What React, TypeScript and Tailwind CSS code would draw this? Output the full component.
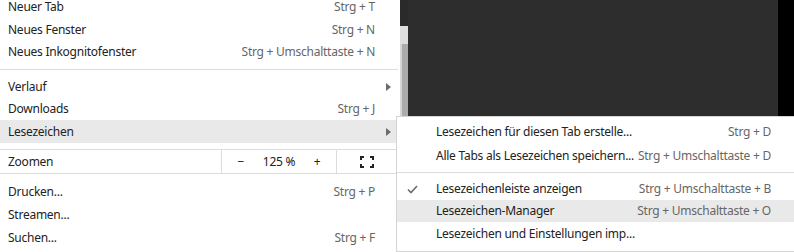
import type { ReactNode } from 'react'

function Arrow() {
  return (
    <svg width="5" height="8" viewBox="0 0 5 8" className="shrink-0">
      <polygon points="0,0 5,4 0,8" fill="#6b6b6b" />
    </svg>
  )
}

function Row({
  label,
  shortcut,
  arrow,
  className = '',
}: {
  label: string
  shortcut?: string
  arrow?: boolean
  className?: string
}) {
  return (
    <div className={`flex items-center justify-between pl-[8px] ${arrow ? 'pr-[9px]' : 'pr-[25px]'} ${className}`}>
      <span>{label}</span>
      {shortcut && <span className="text-[#666]">{shortcut}</span>}
      {arrow && <Arrow />}
    </div>
  )
}

function Sep() {
  return (
    <div className="py-[6px] pr-[2px]">
      <div className="h-px bg-[#dcdcdc]" />
    </div>
  )
}

function FullscreenIcon() {
  return (
    <svg width="14" height="12" viewBox="0 0 14 12" fill="none" stroke="#222" strokeWidth="2">
      <path d="M1 4V1h3M10 1h3v3M13 8v3h-3M4 11H1V8" />
    </svg>
  )
}

function SubRow({
  label,
  shortcut,
  check,
  className = '',
}: {
  label: string
  shortcut?: string
  check?: boolean
  className?: string
}) {
  return (
    <div className={`flex items-center pr-[23px] ${className}`}>
      <div className="flex w-[39px] shrink-0 items-center pl-[10px]">
        {check && (
          <svg width="11" height="9" viewBox="0 0 11 9" fill="none" stroke="#6b6b6b" strokeWidth="1.6">
            <path d="M1 4.5l3 3L10 1" />
          </svg>
        )}
      </div>
      <span className="flex-1">{label}</span>
      {shortcut && <span className="text-[#666]">{shortcut}</span>}
    </div>
  )
}

function SubMenu() {
  return (
    <div className="absolute top-[116px] bottom-0 left-[396px] right-0 border border-r-0 border-[#d4d4d4] bg-white pt-[3px] pb-[5px]">
      <SubRow className="h-[24px]" label="Lesezeichen für diesen Tab erstelle..." shortcut="Strg + D" />
      <SubRow className="h-[24px]" label="Alle Tabs als Lesezeichen speichern..." shortcut="Strg + Umschalttaste + D" />
      <div className="pt-[4px] pb-[5px]">
        <div className="h-px bg-[#dcdcdc]" />
      </div>
      <SubRow className="h-[22px]" check label="Lesezeichenleiste anzeigen" shortcut="Strg + Umschalttaste + B" />
      <SubRow className="h-[22px] bg-[#e9e9e9]" label="Lesezeichen-Manager" shortcut="Strg + Umschalttaste + O" />
      <SubRow className="h-[24px]" label="Lesezeichen und Einstellungen imp..." />
    </div>
  )
}

function Section({ children }: { children: ReactNode }) {
  return <div>{children}</div>
}

export default function App() {
  return (
    <div className="relative flex h-[252px] w-[794px] overflow-hidden whitespace-nowrap bg-white font-['Noto_Sans',sans-serif] text-[12px] tracking-[-0.25px] text-[#222]">
      <div className="w-[400px] shrink-0 bg-white">
        <div className="-mt-[4px]">
          <Row className="h-[22px]" label="Neuer Tab" shortcut="Strg + T" />
          <Row className="h-[23px]" label="Neues Fenster" shortcut="Strg + N" />
          <Row className="h-[22px]" label="Neues Inkognitofenster" shortcut="Strg + Umschalttaste + N" />
        </div>
        <Sep />
        <Section>
          <Row className="h-[22px]" label="Verlauf" arrow />
          <Row className="h-[22px]" label="Downloads" shortcut="Strg + J" />
          <Row className="h-[23px] bg-[#e9e9e9]" label="Lesezeichen" arrow />
        </Section>
        <div className="h-[6px]" />
        <div className="flex h-[25px] border-y border-[#dcdcdc] pr-[2px]">
          <div className="flex w-[222px] items-center border-r border-[#dcdcdc] pl-[8px]">Zoomen</div>
          <div className="flex w-[115px] items-center border-r border-[#dcdcdc]">
            <span className="w-[38px] text-center">−</span>
            <span className="w-[39px] text-center">125 %</span>
            <span className="w-[38px] text-center">+</span>
          </div>
          <div className="flex flex-1 items-center justify-center pr-[2px]">
            <FullscreenIcon />
          </div>
        </div>
        <div className="h-[6px]" />
        <Section>
          <Row className="h-[23px]" label="Drucken..." shortcut="Strg + P" />
          <Row className="h-[23px]" label="Streamen..." />
          <Row className="h-[23px]" label="Suchen..." shortcut="Strg + F" />
        </Section>
      </div>

      <div className="flex w-[8px] shrink-0 flex-col">
        <div className="h-[26px] bg-[#2a2a2a]" />
        <div className="h-[18px] bg-[#dedede]" />
        <div className="flex-1 border-l-2 border-[#d6d6d6] bg-[#ababab]" />
      </div>
      <div className="flex-1 bg-[#2d2d2d]" />
      <div className="w-[16px] shrink-0 bg-black" />

      <SubMenu />
    </div>
  )
}
